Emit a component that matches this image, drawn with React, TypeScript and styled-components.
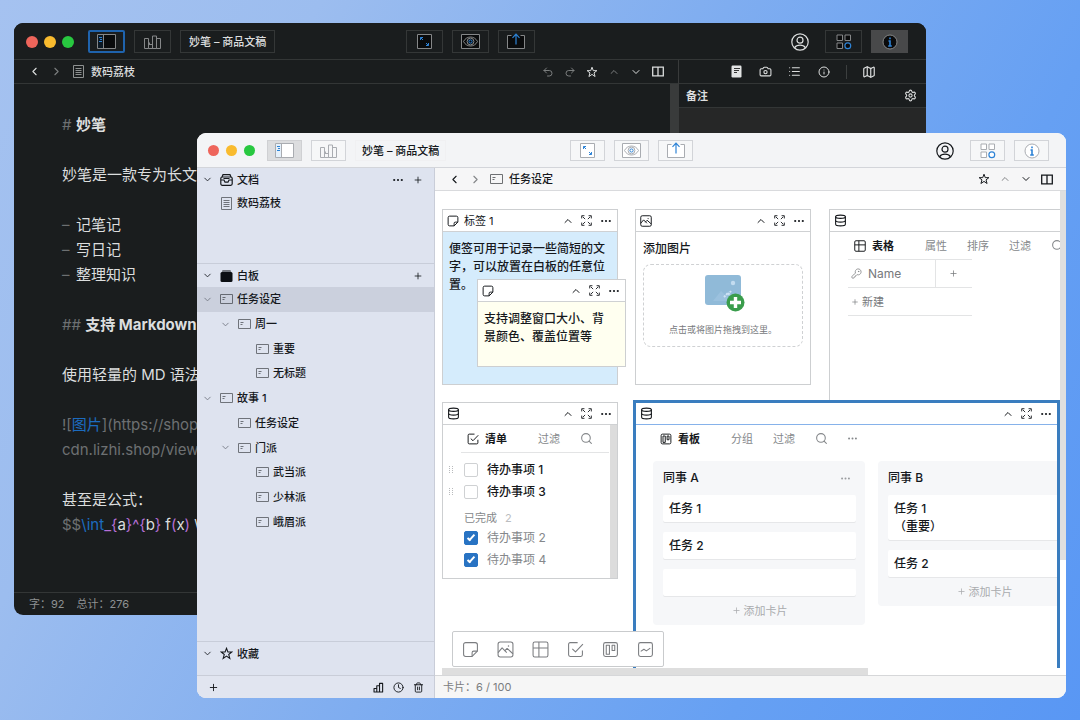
import React from "react";
import styled, { createGlobalStyle, css } from "styled-components";
import {
  Camera,
  ChevronDown,
  ChevronLeft,
  ChevronRight,
  ChevronUp,
  Clock,
  Database,
  Info,
  KeyRound,
  List,
  Map as MapIcon,
  Plus,
  Redo2,
  Search,
  Settings,
  Trash2,
  Undo2,
} from "lucide-react";

const GlobalStyle = createGlobalStyle`
  *, *::before, *::after { box-sizing: border-box; }
  body {
    margin: 0;
    font-family: Inter, "Noto Sans CJK SC", "Liberation Sans", sans-serif;
    font-size: 11px;
    line-height: 16px;
    -webkit-font-smoothing: antialiased;
  }
  button, input { font: inherit; color: inherit; }
  h2, h3, p, ul { margin: 0; padding: 0; font: inherit; }
  ul { list-style: none; }
  svg { display: block; flex: none; }
`;

/* ---------- icons ---------- */

type GlyphProps = { size?: number; stroke?: number; children: React.ReactNode };

const Glyph = ({ size = 12, stroke = 1.3, children }: GlyphProps) => (
  <svg
    width={size}
    height={size}
    viewBox="0 0 16 16"
    fill="none"
    stroke="currentColor"
    strokeWidth={stroke}
    strokeLinejoin="round"
    aria-hidden
  >
    {children}
  </svg>
);

type Sized = { size?: number; stroke?: number };

const StarIcon = (p: Sized) => (
  <Glyph {...p}>
    <path strokeLinejoin="miter" d="M8 1.6l1.7 4.6h4.8l-3.8 3 1.4 4.8L8 11.2l-4.1 2.8 1.4-4.8-3.8-3h4.8z" />
  </Glyph>
);
const NoteIcon = (p: Sized) => (
  <Glyph {...p}>
    <path d="M1.5 3.5a2 2 0 0 1 2-2h9a2 2 0 0 1 2 2v6l-5 5h-6a2 2 0 0 1-2-2z" />
    <path d="M14.5 9.5h-3.5a1.5 1.5 0 0 0-1.5 1.5v3.5" />
  </Glyph>
);
const PictureIcon = (p: Sized) => (
  <Glyph {...p}>
    <rect x="1" y="1" width="14" height="14" rx="2" />
    <path d="M1 11l3.800-4.500 4.400 4.500M7 9.500l2.500-2.500 5.500 5" />
    <circle cx="10.800" cy="4.800" r=".7" fill="currentColor" stroke="none" />
  </Glyph>
);
const GridTableIcon = (p: Sized) => (
  <Glyph {...p}>
    <rect x="1" y="1" width="14" height="14" rx="1.6" />
    <path d="M1 6.5h14M6.5 1v14" />
  </Glyph>
);
const ChecklistIcon = (p: Sized) => (
  <Glyph {...p}>
    <path d="M10 1.5H3A1.5 1.5 0 0 0 1.5 3v10A1.5 1.5 0 0 0 3 14.5h10a1.5 1.5 0 0 0 1.5-1.5V9" />
    <path d="M5 7.5l3 2.8 7-7.3" />
  </Glyph>
);
const KanbanIcon = (p: Sized) => (
  <Glyph {...p}>
    <rect x="1.5" y="1.5" width="13" height="13" rx="1.8" />
    <path d="M4 4h3v8.500H4zM9.5 4H12v5H9.5z" />
  </Glyph>
);
const ChartIcon = (p: Sized) => (
  <Glyph {...p}>
    <rect x="1.5" y="1.5" width="13" height="13" rx="1.8" />
    <path d="M3.5 9.800l3-2 2.300 1.500 3.700-2.600" />
  </Glyph>
);
const ExpandIcon = (p: Sized) => (
  <Glyph {...p}>
    <path d="M1 5V1h4M11 1h4v4M15 11v4h-4M5 15H1v-4M2.5 2.5L6 6M13.5 2.5L10 6M13.5 13.5L10 10M2.5 13.5L6 10" />
  </Glyph>
);
const DotsIcon = ({ size = 10 }: Sized) => (
  <svg width={size} height={size} viewBox="0 0 10 10" fill="currentColor" aria-hidden>
    <circle cx="1.2" cy="5" r="1.1" />
    <circle cx="5" cy="5" r="1.1" />
    <circle cx="8.8" cy="5" r="1.1" />
  </svg>
);
const SplitIcon = () => (
  <svg width="12" height="11" viewBox="0 0 12 11" fill="none" stroke="currentColor" strokeWidth="1.3" aria-hidden>
    <path d="M.7 1.200h10.600v8.600H.7zM6 1.200v8.600" />
  </svg>
);
const PageIcon = () => (
  <svg width="13" height="13" viewBox="0 0 13 13" fill="none" stroke="currentColor" aria-hidden>
    <path d="M1.5.5h10v12h-10z" />
    <path d="M3.5 3.5h6M3.5 5.5h6M3.5 7.5h6M3.5 9.5h6" />
  </svg>
);
const BoardIcon = () => (
  <svg width="13" height="10" viewBox="0 0 13 10" fill="none" stroke="currentColor" aria-hidden>
    <path d="M.5.5h12v9H.5zM2.5 3.5h3M2.5 5.5h2" />
  </svg>
);
const TrayIcon = () => (
  <svg width="13" height="12" viewBox="0 0 13 12" fill="none" stroke="currentColor" strokeWidth="1.2" aria-hidden>
    <path d="M2 3L3 .7h7L11 3" />
    <rect x=".8" y="3" width="11.4" height="8.3" rx="1.5" />
    <path d="M1 6h3l1 2.2h3L9 6h3M3.5 4.5h6" />
  </svg>
);
const StackIcon = () => (
  <svg width="13" height="12" viewBox="0 0 13 12" aria-hidden>
    <path d="M2.5 0h8l1 3h-10z" fill="#72767e" />
    <rect x=".5" y="2" width="12" height="10" rx="1.5" fill="#0b0e13" />
  </svg>
);
const BarsIcon = () => (
  <Glyph size={11} stroke={1.6}>
    <path d="M1.5 9.5h4v5h-4zM5.5 5.5h4v9h-4zM9.5 2H14v12.500H9.5z" />
  </Glyph>
);
const NotebookIcon = () => (
  <svg width="11" height="13" viewBox="0 0 11 13" aria-hidden>
    <rect x=".5" y=".5" width="10" height="12" rx="1.2" fill="#e2e4e4" />
    <path d="M3 3.5h6M3 5.5h5M3 7.5h3" stroke="#333" />
  </svg>
);
const UserIcon = () => (
  <svg width="18" height="18" viewBox="0 0 18 18" fill="none" stroke="currentColor" strokeWidth="1.2" aria-hidden>
    <circle cx="9" cy="9" r="8.2" />
    <circle cx="9" cy="7.2" r="3" />
    <path d="M3.500 14.800c1.300-2 3.200-2.600 5.500-2.600s4.200.6 5.500 2.600" />
  </svg>
);

/* Title bar artwork; `fill` is the paper colour of the current theme. */
type Art = { fill: string; line: string };
const blue = "#2d83d6";

const SidebarArt = ({ fill, line }: Art) => (
  <svg width="19" height="15" viewBox="0 0 19 15" aria-hidden>
    <path d="M.5.5h18v14H.5z" fill={fill} stroke={line} />
    <path d="M1 1h6v13H1z" fill={blue} opacity=".12" />
    <path d="M6.5.5v14" stroke={line} />
    <path d="M2 3.5h3M3 5.5h2M2 7.5h3" stroke={blue} />
  </svg>
);
const TowersArt = ({ fill, line }: Art) => (
  <svg width="18" height="14" viewBox="0 0 18 14" fill={fill} stroke={line} aria-hidden>
    <path d="M.5 3.5h4v10h-4zM4.5 9.5h4v4h-4zM8.5 1v12.500h4V1zM12.5 3.5h4v10h-4zM5.500 7.5v2" />
  </svg>
);
const ResizeArt = ({ fill, line }: Art) => (
  <svg width="15" height="15" viewBox="0 0 15 15" aria-hidden>
    <path d="M.5.5h14v14H.5z" fill={fill} stroke={line} />
    <path d="M3.5 6V3.500H6M3.500 3.500l2.500 2.500M11.500 9v2.500H9M11.500 11.500L9 9" fill="none" stroke={blue} />
  </svg>
);
const EyeArt = ({ fill, line }: Art) => (
  <svg width="19" height="15" viewBox="0 0 19 15" fill="none" aria-hidden>
    <path d="M.5.5h18v14H.5z" fill={fill} stroke={line} />
    <path d="M2.5 7.5c3-6 11-6 14 0-3 6-11 6-14 0z" stroke={line} />
    <circle cx="9.5" cy="7.5" r="3.4" stroke={line} />
    <circle cx="9.5" cy="7.5" r="1.6" stroke={blue} />
  </svg>
);
const ShareArt = ({ fill, line }: Art) => (
  <svg width="18" height="17" viewBox="0 0 18 17" fill="none" aria-hidden>
    <path d="M4.500 2.5H.5v13h17v-13h-4" fill={fill} stroke={line} />
    <path d="M9 11.5V1.2M5.5 4.8L9 1.2l3.500 3.600" stroke={blue} strokeWidth="1.2" />
  </svg>
);
const AppsArt = ({ fill, line }: Art) => (
  <svg width="16" height="16" viewBox="0 0 16 16" aria-hidden>
    <path d="M1 1h5.500v5.500H1zM9 1h5.500v5.500H9zM1 9h5.500v5.500H1z" fill={fill} stroke={line} />
    <circle cx="11.8" cy="11.8" r="2.9" fill={fill} stroke={blue} strokeWidth="1.2" />
  </svg>
);
const InfoArt = ({ fill, line }: Art) => (
  <svg width="16" height="16" viewBox="0 0 16 16" aria-hidden>
    <circle cx="8" cy="8" r="7" fill={fill} stroke={line} />
    <path d="M8 3.4v1.8M6.5 7H8v5M6.2 12h3.600" stroke={blue} strokeWidth="1.6" fill="none" />
  </svg>
);
const UploadArt = () => (
  <svg width="40" height="38" viewBox="0 0 40 38" aria-hidden>
    <rect x="0" y="0" width="36" height="30" rx="3" fill="#90bad8" />
    <circle cx="28" cy="8" r="2.2" fill="#c3dcf0" />
    <path d="M8 26l8-10 4 4 4-4 3 4-5 6z" fill="#9bc1de" />
    <path d="M19 22l3-3 1 1 3-4" stroke="#cfe3f5" strokeWidth="2" fill="none" strokeDasharray="2 1" />
    <circle cx="30.5" cy="27.5" r="9" fill="#3a9d4c" />
    <path d="M30.5 22v11M25 27.5h11" stroke="#fff" strokeWidth="3.4" />
  </svg>
);

/* ---------- desktop and windows ---------- */

const Desktop = styled.main`
  display: grid;
  min-height: 100vh;
  overflow: hidden;
  background: linear-gradient(118deg, #a5c2f0 0%, #9cbdef 22%, #7fadf0 50%, #66a0f3 76%, #5997f4 100%);
`;

const Window = styled.section`
  grid-area: 1 / 1;
  display: flex;
  flex-direction: column;
  min-width: 0;
  overflow: hidden;
`;

const DarkWindow = styled(Window)`
  margin: 23px 154px 105px 14px;
  border-radius: 9px;
  background: #1a1d1e;
  color: #dcdede;
`;

const LightWindow = styled(Window)`
  z-index: 1;
  margin: 133px 14px 22px 197px;
  border-radius: 9px;
  background: #fff;
  color: #15181c;
`;

const TitleBar = styled.header<{ $dark?: boolean }>`
  display: grid;
  grid-template-columns: 1fr auto 1fr;
  align-items: center;
  flex: none;
  height: ${(p) => (p.$dark ? 37 : 35)}px;
  padding: 1px ${(p) => (p.$dark ? 12 : 11)}px 0;
  background: ${(p) => (p.$dark ? "#1a1d1e" : "#f3f4f6")};
  border-bottom: 1px solid ${(p) => (p.$dark ? "#333636" : "#d3d5da")};
`;

const BarGroup = styled.div<{ $end?: boolean }>`
  display: flex;
  align-items: center;
  gap: 9px;
  ${(p) =>
    p.$end &&
    css`
      justify-content: flex-end;
      padding-right: 6px;
    `}
`;

const Lights = styled.div<{ $dark?: boolean }>`
  display: flex;
  gap: ${(p) => (p.$dark ? 6 : 7)}px;
  margin-right: ${(p) => (p.$dark ? 5 : 3)}px;
`;

const Light = styled.button<{ $color: string; $dark?: boolean }>`
  width: ${(p) => (p.$dark ? 12 : 11)}px;
  height: ${(p) => (p.$dark ? 12 : 11)}px;
  padding: 0;
  border: 0;
  border-radius: 50%;
  background: ${(p) => p.$color};
`;

const ToolButton = styled.button<{ $dark?: boolean; $state?: "focus" | "pressed" }>`
  display: flex;
  align-items: center;
  justify-content: center;
  width: ${(p) => (p.$dark ? 37 : 35)}px;
  height: ${(p) => (p.$dark ? 23 : 21)}px;
  padding: 0;
  border: 1px solid ${(p) => (p.$dark ? "#343737" : "#d2d4d8")};
  background: ${(p) => (p.$dark ? "#1a1d1e" : "#f6f7f8")};
  ${(p) =>
    p.$state === "focus" &&
    css`
      border: 2px solid #1f63ad;
      border-radius: 2px;
    `}
  ${(p) =>
    p.$state === "pressed" &&
    css`
      background: ${p.$dark ? "#48494a" : "#dcdddf"};
      border-color: ${p.$dark ? "#48494a" : "#cfd0d3"};
    `}
`;

const DocTitle = styled.h2<{ $dark?: boolean }>`
  display: flex;
  align-items: center;
  height: ${(p) => (p.$dark ? 23 : 21)}px;
  padding: 0 ${(p) => (p.$dark ? 8 : 6)}px;
  border: 1px solid ${(p) => (p.$dark ? "#343737" : "#f0f0f2")};
  white-space: nowrap;
  font-weight: 500;
`;

const UserButton = styled.button`
  display: flex;
  padding: 0;
  margin-right: 7px;
  border: 0;
  background: none;
`;

const WindowTitleBar = ({ dark }: { dark?: boolean }) => {
  const art: Art = dark ? { fill: "#0a0b0c", line: "#858788" } : { fill: "#fff", line: "#a9acb1" };
  return (
    <TitleBar $dark={dark}>
      <BarGroup>
        <Lights $dark={dark}>
          <Light $dark={dark} $color="#ee655b" aria-label="关闭" />
          <Light $dark={dark} $color="#f9bb2e" aria-label="最小化" />
          <Light $dark={dark} $color="#28c840" aria-label="缩放" />
        </Lights>
        <ToolButton $dark={dark} $state={dark ? "focus" : "pressed"} aria-label="边栏">
          <SidebarArt {...art} />
        </ToolButton>
        <ToolButton $dark={dark} aria-label="统计">
          <TowersArt {...art} fill="none" />
        </ToolButton>
        <DocTitle $dark={dark}>妙笔 – 商品文稿</DocTitle>
      </BarGroup>
      <BarGroup>
        <ToolButton $dark={dark} aria-label="专注">
          <ResizeArt {...art} />
        </ToolButton>
        <ToolButton $dark={dark} aria-label="预览">
          <EyeArt {...art} />
        </ToolButton>
        <ToolButton $dark={dark} aria-label="分享">
          <ShareArt {...art} />
        </ToolButton>
      </BarGroup>
      <BarGroup $end>
        <UserButton aria-label="账户">
          <UserIcon />
        </UserButton>
        <ToolButton $dark={dark} aria-label="应用">
          <AppsArt {...art} />
        </ToolButton>
        <ToolButton $dark={dark} $state={dark ? "pressed" : undefined} aria-label="信息">
          <InfoArt {...art} />
        </ToolButton>
      </BarGroup>
    </TitleBar>
  );
};

const IconButton = styled.button<{ $w?: number; $faint?: boolean }>`
  display: flex;
  align-items: center;
  justify-content: center;
  flex: none;
  width: ${(p) => p.$w ?? 22}px;
  height: 20px;
  padding: 0;
  border: 0;
  background: none;
  opacity: ${(p) => (p.$faint ? 0.5 : 1)};
`;

const Spacer = styled.div`
  flex: 1;
`;

const DocBar = styled.div<{ $dark?: boolean }>`
  display: flex;
  align-items: center;
  flex: none;
  height: ${(p) => (p.$dark ? 24 : 23)}px;
  padding: 0 9px;
  background: ${(p) => (p.$dark ? "#1a1d1e" : "#f6f6f7")};
  border-bottom: 1px solid ${(p) => (p.$dark ? "#333636" : "#d9dadd")};
`;

const DocName = styled.span<{ $dark?: boolean }>`
  display: flex;
  align-items: center;
  gap: 6px;
  margin-left: ${(p) => (p.$dark ? 5 : 4)}px;
  font-weight: 500;

  svg {
    opacity: 0.6;
  }
`;

/* ---------- dark window content ---------- */

const Split = styled.div`
  display: flex;
  flex: 1;
  min-height: 0;
`;

const Pane = styled.div`
  display: flex;
  flex-direction: column;
  flex: 1;
  min-width: 0;
`;

const EditorArea = styled.div`
  display: flex;
  flex: 1;
  min-height: 0;
`;

const Markdown = styled.article`
  flex: 1;
  min-width: 0;
  padding: 28px 0 0 48px;
  overflow: hidden;
  font-size: 15px;
  line-height: 25px;
  white-space: pre;

  p,
  h3 {
    min-height: 25px;
  }
  h3 {
    font-weight: 700;
  }
`;

const Mark = styled.span<{ $tone?: "dim" | "link" | "math" }>`
  font-weight: 400;
  color: ${(p) => ({ dim: "#6d7072", link: "#1c6cc0", math: "#b56fd6" })[p.$tone ?? "dim"]};
`;

const Bullet = styled(Mark)`
  display: inline-block;
  width: 14px;
`;

const ScrollTrack = styled.div`
  width: 8px;
  background: #393b3b;
`;

const DarkStatus = styled.footer`
  display: flex;
  align-items: center;
  gap: 12px;
  height: 23px;
  padding-left: 15px;
  border-top: 1px solid #333636;
  color: #8e9192;
`;

const Inspector = styled.aside`
  display: flex;
  flex-direction: column;
  width: 248px;
  border-left: 1px solid #393b3b;
  background: #262727;
`;

const InspectorTabs = styled(DocBar)`
  justify-content: center;
  gap: 7px;
  padding: 0;
`;

const Divider = styled.i`
  width: 1px;
  height: 14px;
  margin: 0 4px;
  background: #3c3f3f;
`;

const InspectorHead = styled(DocBar)`
  justify-content: space-between;
  padding: 0 5px 0 7px;
  font-weight: 700;
`;

const DarkApp = () => (
  <DarkWindow aria-label="妙笔编辑器">
    <WindowTitleBar dark />
    <Split>
      <Pane>
        <DocBar $dark>
          <IconButton aria-label="后退"><ChevronLeft size={13} /></IconButton>
          <IconButton $faint aria-label="前进"><ChevronRight size={13} /></IconButton>
          <DocName $dark><PageIcon />数码荔枝</DocName>
          <Spacer />
          <IconButton $faint aria-label="撤销"><Undo2 size={12} /></IconButton>
          <IconButton $faint aria-label="重做"><Redo2 size={12} /></IconButton>
          <IconButton aria-label="收藏"><StarIcon size={12} /></IconButton>
          <IconButton $faint aria-label="上一个"><ChevronUp size={12} /></IconButton>
          <IconButton aria-label="下一个"><ChevronDown size={12} /></IconButton>
          <IconButton aria-label="分栏"><SplitIcon /></IconButton>
        </DocBar>
        <EditorArea>
          <Markdown>
            <h3><Bullet>#</Bullet>妙笔</h3>
            <p />
            <p>妙笔是一款专为长文</p>
            <p />
            <p><Bullet>–</Bullet>记笔记</p>
            <p><Bullet>–</Bullet>写日记</p>
            <p><Bullet>–</Bullet>整理知识</p>
            <p />
            <h3><Mark>## </Mark>支持 Markdown</h3>
            <p />
            <p>使用轻量的 MD 语法</p>
            <p />
            <p><Mark>![</Mark><Mark $tone="link">图片</Mark><Mark>](https://shop</Mark></p>
            <p><Mark>cdn.lizhi.shop/views</Mark></p>
            <p />
            <p>甚至是公式：</p>
            <p>
              <Mark>$$</Mark><Mark $tone="link">\int</Mark><Mark $tone="math">_{"{"}</Mark>a
              <Mark $tone="math">{"}^{"}</Mark>b<Mark $tone="math">{"}"}</Mark> f
              <Mark $tone="math">(</Mark>x<Mark $tone="math">)</Mark> \
            </p>
          </Markdown>
          <ScrollTrack />
        </EditorArea>
        <DarkStatus><span>字：92</span><span>总计：276</span></DarkStatus>
      </Pane>
      <Inspector>
        <InspectorTabs $dark>
          <IconButton aria-label="备注"><NotebookIcon /></IconButton>
          <IconButton aria-label="图片"><Camera size={13} /></IconButton>
          <IconButton aria-label="大纲"><List size={13} /></IconButton>
          <IconButton aria-label="详情"><Info size={12} /></IconButton>
          <Divider />
          <IconButton aria-label="地图"><MapIcon size={14} /></IconButton>
        </InspectorTabs>
        <InspectorHead $dark>
          备注
          <IconButton aria-label="设置"><Settings size={13} /></IconButton>
        </InspectorHead>
      </Inspector>
    </Split>
  </DarkWindow>
);

/* ---------- sidebar ---------- */

const Sidebar = styled.nav`
  display: flex;
  flex-direction: column;
  flex: none;
  width: 238px;
  background: #dee3ef;
  border-right: 1px solid #c9cdd8;
`;

const Section = styled.section<{ $size?: number }>`
  ${(p) => (p.$size ? css`flex: 0 0 ${p.$size}px;` : css`flex: 1;`)}

  & + & {
    border-top: 1px solid #c8cdd9;
  }
`;

const TreeLine = styled.div<{ $level?: number; $selected?: boolean; $head?: boolean }>`
  display: flex;
  align-items: center;
  height: ${(p) => (p.$head ? "23px" : "100%")};
  padding-left: ${(p) => 5 + (p.$level ?? 0) * 18}px;
  padding-right: 6px;
  background: ${(p) => (p.$selected ? "#cbd0dd" : "none")};
  font-weight: 500;
`;

const Toggle = styled.button<{ $hidden?: boolean; $strong?: boolean }>`
  display: flex;
  width: 11px;
  margin-right: 7px;
  padding: 0;
  border: 0;
  background: none;
  visibility: ${(p) => (p.$hidden ? "hidden" : "visible")};
  color: ${(p) => (p.$strong ? "#22262d" : "#777c87")};
`;

const TreeLink = styled.a<{ $strong?: boolean }>`
  display: flex;
  align-items: center;
  gap: 4px;
  flex: 1;
  color: inherit;
  text-decoration: none;

  svg {
    opacity: ${(p) => (p.$strong ? 1 : 0.55)};
  }
`;

const Tree = styled.ul<{ $height: number }>`
  display: grid;
  grid-auto-rows: 1fr;
  height: ${(p) => p.$height}px;
`;

type TreeItem = { label: string; level: number; open?: boolean; selected?: boolean };

const boards: TreeItem[] = [
  { label: "任务设定", level: 0, open: true, selected: true },
  { label: "周一", level: 1, open: true },
  { label: "重要", level: 2 },
  { label: "无标题", level: 2 },
  { label: "故事 1", level: 0, open: true },
  { label: "任务设定", level: 1 },
  { label: "门派", level: 1, open: true },
  { label: "武当派", level: 2 },
  { label: "少林派", level: 2 },
  { label: "峨眉派", level: 2 },
];

const SectionHead = ({ icon, label, children }: { icon: React.ReactNode; label: string; children?: React.ReactNode }) => (
  <TreeLine $head>
    <Toggle $strong aria-label={"折叠" + label}><ChevronDown size={11} /></Toggle>
    <TreeLink $strong href="#">{icon}{label}</TreeLink>
    {children}
  </TreeLine>
);

const SidebarFoot = styled.footer`
  display: flex;
  align-items: center;
  flex: none;
  height: 23px;
  padding: 0 6px;
  border-top: 1px solid #c9cdd8;
  background: #e1e5f0;
`;

const LightSidebar = () => (
  <Sidebar aria-label="文稿">
    <Section $size={95}>
      <SectionHead icon={<TrayIcon />} label="文档">
        <IconButton $w={20} aria-label="更多"><DotsIcon /></IconButton>
        <IconButton $w={20} aria-label="新建文档"><Plus size={10} /></IconButton>
      </SectionHead>
      <Tree $height={24}>
        <li>
          <TreeLine>
            <Toggle $hidden tabIndex={-1} />
            <TreeLink href="#"><PageIcon />数码荔枝</TreeLink>
          </TreeLine>
        </li>
      </Tree>
    </Section>
    <Section>
      <SectionHead icon={<StackIcon />} label="白板">
        <IconButton $w={20} aria-label="新建白板"><Plus size={10} /></IconButton>
      </SectionHead>
      <Tree $height={247}>
        {boards.map((b, i) => (
          <li key={i}>
            <TreeLine $level={b.level} $selected={b.selected}>
              <Toggle $hidden={!b.open} aria-label={"折叠" + b.label}><ChevronDown size={11} /></Toggle>
              <TreeLink href="#"><BoardIcon />{b.label}</TreeLink>
            </TreeLine>
          </li>
        ))}
      </Tree>
    </Section>
    <Section $size={34}>
      <SectionHead icon={<StarIcon size={13} />} label="收藏" />
    </Section>
    <SidebarFoot>
      <IconButton $w={20} aria-label="新建"><Plus size={11} /></IconButton>
      <Spacer />
      <IconButton $w={20} aria-label="统计"><BarsIcon /></IconButton>
      <IconButton $w={20} aria-label="历史"><Clock size={11} /></IconButton>
      <IconButton $w={20} aria-label="废纸篓"><Trash2 size={11} /></IconButton>
    </SidebarFoot>
  </Sidebar>
);

/* ---------- whiteboard ---------- */

const Viewport = styled.div`
  display: grid;
  grid-template-columns: 1fr 6px;
  grid-template-rows: 1fr 7px;
  flex: 1;
`;

const Canvas = styled.div`
  position: relative;
  overflow: hidden;
  background: #fff;
`;

const VerticalBar = styled.div`
  align-self: start;
  height: 369px;
  background: #dfdfdf;
`;

const HorizontalBar = styled.div`
  width: 426px;
  margin-left: 7px;
  background: #dedede;
`;

type Place = { $x: number; $y: number; $w?: number; $h: number };

const CardFrame = styled.section<Place & { $tint?: string; $active?: boolean; $open?: boolean }>`
  position: absolute;
  left: ${(p) => p.$x}px;
  top: ${(p) => p.$y}px;
  height: ${(p) => p.$h}px;
  ${(p) => (p.$w ? css`width: ${p.$w}px;` : css`right: 0;`)}
  display: flex;
  flex-direction: column;
  overflow: hidden;
  border: ${(p) => (p.$active ? "3px solid #3a7dbf" : "1px solid #cdcfd1")};
  ${(p) => p.$open && css`border-right: 0;`}
  background: ${(p) => p.$tint ?? "#fff"};
`;

const CardHead = styled.header<{ $active?: boolean }>`
  display: flex;
  align-items: center;
  flex: none;
  gap: 5px;
  height: 22px;
  padding: 0 2px 0 4px;
  border-bottom: 1px solid ${(p) => (p.$active ? "#86b2ea" : "#cfd1d3")};
  background: #fff;
`;

const CardTools = styled.div`
  display: flex;
  margin-left: auto;
`;

type CardProps = Place & {
  icon: React.ReactNode;
  title?: string;
  label: string;
  tint?: string;
  active?: boolean;
  open?: boolean;
  children: React.ReactNode;
};

const Card = ({ icon, title, label, tint, active, open, children, ...place }: CardProps) => (
  <CardFrame {...place} $tint={tint} $active={active} $open={open} aria-label={label}>
    <CardHead $active={active}>
      {icon}
      {title && <span>{title}</span>}
      {!open && (
        <CardTools>
          <IconButton $w={19} aria-label="收起"><ChevronUp size={12} /></IconButton>
          <IconButton $w={19} aria-label="展开"><ExpandIcon size={11} /></IconButton>
          <IconButton $w={19} aria-label="更多"><DotsIcon /></IconButton>
        </CardTools>
      )}
    </CardHead>
    {children}
  </CardFrame>
);

const NoteText = styled.p`
  padding: 8px 11px 8px 6px;
  font-size: 12px;
  line-height: 18px;
  font-weight: 500;
`;

const PictureBody = styled.div`
  display: flex;
  flex-direction: column;
  gap: 6px;
  padding: 8px 7px;
`;

const PictureTitle = styled.h3`
  font-size: 12px;
  line-height: 18px;
  font-weight: 500;
`;

const DropZone = styled.button`
  display: flex;
  flex-direction: column;
  align-items: center;
  gap: 10px;
  height: 83px;
  padding: 10px 0 0;
  border: 1px dashed #cfd1d3;
  border-radius: 8px;
  background: none;
  color: #77797c;
  font-size: 9px;
  line-height: 14px;

  svg {
    margin-left: 4px;
  }
`;

const ViewBar = styled.div<{ $ruled?: boolean }>`
  display: flex;
  align-items: center;
  flex: none;
  gap: 20px;
  height: ${(p) => (p.$ruled ? 28 : 27)}px;
  margin: 0 1px 0 18px;
  padding-left: 6px;
  border-bottom: ${(p) => (p.$ruled ? "1px solid #e3e4e5" : "0")};
  color: #85888b;
`;

const ViewTab = styled.button<{ $on?: boolean }>`
  display: flex;
  align-items: center;
  flex: none;
  gap: 6px;
  margin: 0 ${(p) => (p.$on ? 11 : 0)}px 0 0;
  padding: 0;
  border: 0;
  background: none;
  white-space: nowrap;
  ${(p) => p.$on && css`color: #17191c; font-weight: 700;`}
`;

const DataTable = styled.table`
  width: 124px;
  margin-left: 18px;
  border-collapse: collapse;
  color: #77797c;

  th,
  td {
    height: 28px;
    padding: 0 3px;
    border-top: 1px solid #e3e4e5;
    border-bottom: 1px solid #e3e4e5;
    font-weight: 400;
    text-align: left;
  }
  th + th {
    width: 37px;
    border-left: 1px solid #e3e4e5;
  }
`;

const FieldName = styled.span`
  display: flex;
  align-items: center;
  gap: 6px;
  font-size: 12px;
`;

const TextButton = styled.button<{ $faint?: boolean }>`
  display: flex;
  align-items: center;
  justify-content: center;
  gap: 3px;
  padding: 0;
  border: 0;
  background: none;
  white-space: nowrap;
  color: ${(p) => (p.$faint ? "#a9abae" : "inherit")};
`;

const ListBody = styled.div`
  display: flex;
  flex: 1;
`;

const ListPane = styled.div`
  flex: 1;
`;

const ListTrack = styled.div`
  width: 7px;
  background: #dcdcdc;
`;

const Todos = styled.ul`
  padding: 6px 0 0 6px;
`;

const Todo = styled.li<{ $done?: boolean }>`
  display: flex;
  align-items: center;
  height: 22px;
  font-size: 12px;
  font-weight: ${(p) => (p.$done ? 400 : 500)};
  color: ${(p) => (p.$done ? "#85888b" : "#17191c")};

  svg {
    width: 5px;
    margin-right: 10px;
    color: #b9bbbd;
    visibility: ${(p) => (p.$done ? "hidden" : "visible")};
  }
`;

const Tick = styled.input`
  position: relative;
  appearance: none;
  width: 14px;
  height: 14px;
  margin: 0 9px 0 0;
  border: 1px solid #cfd1d3;
  border-radius: 2px;
  background: #fff;

  &:checked {
    border-color: #2873c3;
    background: #2873c3;
  }
  &:checked::after {
    content: "";
    position: absolute;
    left: 4px;
    top: 1px;
    width: 4px;
    height: 8px;
    border: solid #fff;
    border-width: 0 2px 2px 0;
    transform: rotate(42deg);
  }
`;

const DoneHead = styled.li`
  display: flex;
  align-items: center;
  gap: 8px;
  height: 24px;
  padding: 5px 0 0 15px;
  color: #85888b;

  span {
    color: #bbbdc0;
  }
`;

const Grip = () => (
  <svg width="5" height="8" viewBox="0 0 5 8" fill="currentColor" aria-hidden>
    <path d="M0 0h1v1H0zM3 0h1v1H3zM0 2h1v1H0zM3 2h1v1H3zM0 4h1v1H0zM3 4h1v1H3zM0 6h1v1H0zM3 6h1v1H3z" />
  </svg>
);

const TodoRow = ({ id, label, done }: { id: string; label: string; done?: boolean }) => (
  <Todo $done={done}>
    <Grip />
    <Tick type="checkbox" id={id} defaultChecked={done} />
    <label htmlFor={id}>{label}</label>
  </Todo>
);

const Columns = styled.div`
  display: flex;
  align-items: flex-start;
  gap: 13px;
  padding: 9px 0 0 17px;
`;

const Column = styled.section`
  flex: 0 0 212px;
  padding: 0 9px 0 10px;
  border-radius: 4px;
  background: #f6f7f9;
`;

const ColumnHead = styled.header`
  display: flex;
  align-items: center;
  justify-content: space-between;
  height: 34px;
  font-size: 12px;
  font-weight: 500;

  button {
    color: #9a9da0;
  }
`;

const TaskList = styled.ul`
  display: grid;
  gap: 10px;
`;

const Task = styled.li`
  min-height: 27px;
  padding: 5px 6px 4px;
  border-radius: 2px;
  background: #fff;
  box-shadow: 0 1px 0 #e6e7e9;
  font-size: 12px;
  line-height: 18px;
  font-weight: 500;
  white-space: pre-line;
`;

const ColumnFoot = styled.footer`
  display: flex;
  align-items: center;
  justify-content: center;
  height: 29px;
`;

const KanbanColumn = ({ name, tasks, menu }: { name: string; tasks: string[]; menu?: boolean }) => (
  <Column>
    <ColumnHead>
      {name}
      {menu && <IconButton aria-label={name + "菜单"}><DotsIcon size={9} /></IconButton>}
    </ColumnHead>
    <TaskList>
      {tasks.map((t, i) => (
        <Task key={i}>{t}</Task>
      ))}
    </TaskList>
    <ColumnFoot>
      <TextButton $faint><Plus size={9} />添加卡片</TextButton>
    </ColumnFoot>
  </Column>
);

const Toolbox = styled.div`
  position: absolute;
  left: 17px;
  bottom: 1px;
  display: flex;
  border: 1px solid #c9cbcd;
  border-radius: 2px;
  background: #fff;
  color: #7b7d80;

  button {
    height: 34px;
  }
`;

const LightStatus = styled.footer`
  display: flex;
  align-items: center;
  flex: none;
  height: 23px;
  padding-left: 8px;
  border-top: 1px solid #d6d7d9;
  background: #f6f6f6;
  color: #7b7d80;
`;

const LightApp = () => (
  <LightWindow aria-label="妙笔白板">
    <WindowTitleBar />
    <Split>
      <LightSidebar />
      <Pane>
        <DocBar>
          <IconButton $w={21} aria-label="后退"><ChevronLeft size={13} /></IconButton>
          <IconButton $w={21} $faint aria-label="前进"><ChevronRight size={13} /></IconButton>
          <DocName><BoardIcon />任务设定</DocName>
          <Spacer />
          <IconButton $w={21} aria-label="收藏"><StarIcon /></IconButton>
          <IconButton $w={21} $faint aria-label="上一个"><ChevronUp size={12} /></IconButton>
          <IconButton $w={21} aria-label="下一个"><ChevronDown size={12} /></IconButton>
          <IconButton $w={21} aria-label="分栏"><SplitIcon /></IconButton>
        </DocBar>
        <Viewport>
          <Canvas>
            <Card $x={7} $y={18} $w={176} $h={176} icon={<NoteIcon />} title="标签 1" label="标签 1" tint="#d5ecfc">
              <NoteText>便签可用于记录一些简短的文字，可以放置在白板的任意位置。</NoteText>
            </Card>
            <Card $x={200} $y={18} $w={176} $h={176} icon={<PictureIcon />} label="图片">
              <PictureBody>
                <PictureTitle>添加图片</PictureTitle>
                <DropZone>
                  <UploadArt />
                  点击或将图片拖拽到这里。
                </DropZone>
              </PictureBody>
            </Card>
            <Card $x={394} $y={18} $h={220} icon={<Database size={13} />} label="表格" open>
              <ViewBar>
                <ViewTab $on><GridTableIcon />表格</ViewTab>
                <ViewTab>属性</ViewTab>
                <ViewTab>排序</ViewTab>
                <ViewTab>过滤</ViewTab>
                <ViewTab aria-label="搜索"><Search size={13} /></ViewTab>
              </ViewBar>
              <DataTable>
                <thead>
                  <tr>
                    <th scope="col"><FieldName><KeyRound size={11} strokeWidth={1.6} />Name</FieldName></th>
                    <th scope="col"><IconButton $w={30} aria-label="新建列"><Plus size={9} /></IconButton></th>
                  </tr>
                </thead>
                <tbody>
                  <tr>
                    <td colSpan={2}><TextButton><Plus size={8} />新建</TextButton></td>
                  </tr>
                </tbody>
              </DataTable>
            </Card>
            <Card $x={42} $y={88} $w={149} $h={88} icon={<NoteIcon />} label="便签" tint="#fffff0">
              <NoteText>支持调整窗口大小、背景颜色、覆盖位置等</NoteText>
            </Card>
            <Card $x={7} $y={211} $w={176} $h={177} icon={<Database size={13} />} label="清单">
              <ListBody>
                <ListPane>
                  <ViewBar $ruled>
                    <ViewTab $on><ChecklistIcon />清单</ViewTab>
                    <ViewTab>过滤</ViewTab>
                    <ViewTab aria-label="搜索"><Search size={13} /></ViewTab>
                  </ViewBar>
                  <Todos>
                    <TodoRow id="todo-1" label="待办事项 1" />
                    <TodoRow id="todo-3" label="待办事项 3" />
                    <DoneHead>已完成<span>2</span></DoneHead>
                    <TodoRow id="todo-2" label="待办事项 2" done />
                    <TodoRow id="todo-4" label="待办事项 4" done />
                  </Todos>
                </ListPane>
                <ListTrack />
              </ListBody>
            </Card>
            <Card $x={198} $y={209} $h={300} icon={<Database size={13} />} label="看板" active>
              <ViewBar>
                <ViewTab $on><KanbanIcon />看板</ViewTab>
                <ViewTab>分组</ViewTab>
                <ViewTab>过滤</ViewTab>
                <ViewTab aria-label="搜索"><Search size={13} /></ViewTab>
                <ViewTab aria-label="更多"><DotsIcon size={9} /></ViewTab>
              </ViewBar>
              <Columns>
                <KanbanColumn name="同事 A" tasks={["任务 1", "任务 2", ""]} menu />
                <KanbanColumn name="同事 B" tasks={["任务 1\n（重要）", "任务 2"]} />
              </Columns>
            </Card>
            <Toolbox role="toolbar" aria-label="新建卡片">
              <IconButton $w={35} aria-label="便签"><NoteIcon size={17} stroke={1} /></IconButton>
              <IconButton $w={35} aria-label="图片"><PictureIcon size={17} stroke={1} /></IconButton>
              <IconButton $w={35} aria-label="表格"><GridTableIcon size={17} stroke={1} /></IconButton>
              <IconButton $w={35} aria-label="清单"><ChecklistIcon size={17} stroke={1} /></IconButton>
              <IconButton $w={35} aria-label="看板"><KanbanIcon size={17} stroke={1} /></IconButton>
              <IconButton $w={35} aria-label="图表"><ChartIcon size={17} stroke={1} /></IconButton>
            </Toolbox>
          </Canvas>
          <VerticalBar />
          <HorizontalBar />
        </Viewport>
        <LightStatus>卡片：6 / 100</LightStatus>
      </Pane>
    </Split>
  </LightWindow>
);

export default function App() {
  return (
    <>
      <GlobalStyle />
      <Desktop lang="zh-CN">
        <DarkApp />
        <LightApp />
      </Desktop>
    </>
  );
}
